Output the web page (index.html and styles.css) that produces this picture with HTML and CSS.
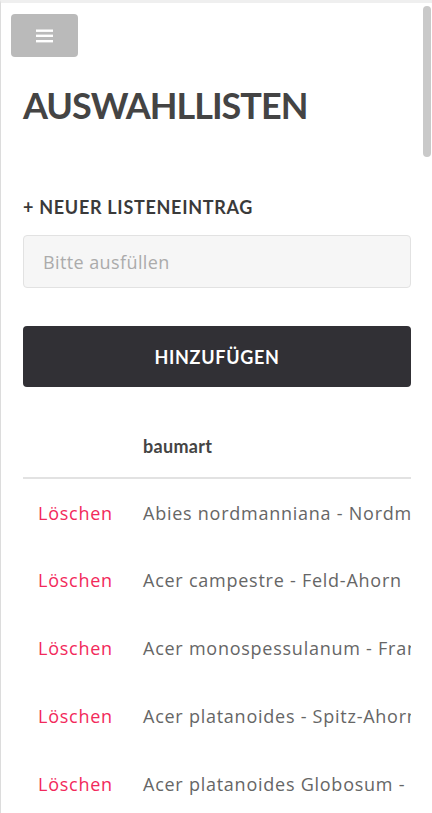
FILE: index.html
```html
<!DOCTYPE html>
<html lang="de">
<head>
<meta charset="utf-8">
<title>Auswahllisten</title>
<link rel="stylesheet" href="styles.css">
</head>
<body>
<div class="frame">
  <div class="topbar">
    <button class="menu-btn" type="button" aria-label="Menü">
      <svg width="17" height="14" viewBox="0 0 17 14" aria-hidden="true">
        <rect x="0" y="0.5" width="17" height="2.4" fill="#fff"/>
        <rect x="0" y="5.6" width="17" height="2.4" fill="#fff"/>
        <rect x="0" y="11" width="17" height="2.4" fill="#fff"/>
      </svg>
    </button>
  </div>
  <main class="content">
    <h1 class="title">AUSWAHLLISTEN</h1>
    <h2 class="section-label">+ NEUER LISTENEINTRAG</h2>
    <input class="text-input" type="text" placeholder="Bitte ausfüllen">
    <button class="primary-btn" type="button">HINZUFÜGEN</button>
    <div class="table-wrap">
      <table class="list-table">
        <colgroup><col class="c-action"><col class="c-name"></colgroup>
        <thead>
          <tr><th></th><th>baumart</th></tr>
        </thead>
        <tbody>
          <tr><td><a class="delete">Löschen</a></td><td class="name">Abies nordmanniana - Nordmann-Tanne</td></tr>
          <tr><td><a class="delete">Löschen</a></td><td class="name">Acer campestre - Feld-Ahorn</td></tr>
          <tr><td><a class="delete">Löschen</a></td><td class="name">Acer monospessulanum - Französischer Ahorn</td></tr>
          <tr><td><a class="delete">Löschen</a></td><td class="name">Acer platanoides - Spitz-Ahorn</td></tr>
          <tr><td><a class="delete">Löschen</a></td><td class="name">Acer platanoides Globosum - Kugel-Ahorn</td></tr>
        </tbody>
      </table>
    </div>
  </main>
  <div class="scroll-thumb"></div>
</div>
</body>
</html>
```

FILE: styles.css
```css
* { box-sizing: border-box; }
html, body {
  margin: 0;
  padding: 0;
  background: #fff;
  font-family: "Open Sans", Lato, "Liberation Sans", sans-serif;
}
.frame {
  position: relative;
  height: 813px;
  overflow: hidden;
  border-top: 3px solid #efefef;
  border-left: 1px solid #dcdcdc;
}
.topbar {
  padding: 11px 0 0 10px;
}
.menu-btn {
  display: flex;
  align-items: center;
  justify-content: center;
  width: 67px;
  height: 43px;
  padding: 0;
  border: none;
  border-radius: 4px;
  background: #bababa;
}
.content {
  padding: 0 21px 0 22px;
}
.title {
  margin: 26px 0 0;
  font-family: Lato, "Open Sans", sans-serif;
  font-size: 36px;
  line-height: 44px;
  font-weight: 700;
  letter-spacing: -1px;
  color: #444;
}
.section-label {
  margin: 68px 0 0;
  font-family: Lato, "Open Sans", sans-serif;
  font-size: 18px;
  line-height: 24px;
  font-weight: 700;
  letter-spacing: 0.7px;
  color: #3a3a3a;
}
.text-input {
  display: block;
  width: 100%;
  height: 53px;
  margin-top: 16px;
  padding: 0 19px;
  border: 1px solid #e2e2e2;
  border-radius: 4px;
  background: #f6f6f6;
  font-family: inherit;
  font-size: 18px;
  letter-spacing: 0.4px;
  color: #555;
}
.text-input::placeholder { color: #ababab; }
.primary-btn {
  display: block;
  width: 100%;
  height: 61px;
  margin-top: 38px;
  border: none;
  border-radius: 4px;
  background: #313035;
  color: #fff;
  font-family: Lato, "Open Sans", sans-serif;
  font-size: 18px;
  font-weight: 700;
  letter-spacing: 0.7px;
}
.table-wrap {
  margin-top: 27px;
  width: 100%;
  overflow: hidden;
}
.list-table {
  border-collapse: collapse;
  width: 100%;
  table-layout: fixed;
}
.c-action { width: 105px; }
.list-table th {
  height: 64px;
  padding: 0 15px;
  text-align: left;
  font-family: Lato, "Open Sans", sans-serif;
  font-size: 18px;
  font-weight: 700;
  letter-spacing: 0.3px;
  color: #444;
  border-bottom: 2px solid #e2e2e2;
}
.list-table td {
  height: 68px;
  padding: 0 15px;
  font-size: 18px;
  letter-spacing: 0.75px;
  white-space: nowrap;
  overflow: hidden;
  vertical-align: middle;
}
.list-table td.name {
  padding-right: 0;
  color: #666;
}
.delete {
  color: #f2295b;
  text-decoration: none;
}
.scroll-thumb {
  position: absolute;
  top: 3px;
  right: 1px;
  width: 8px;
  height: 151px;
  border-radius: 4px;
  background: #c9c9c9;
}
```
